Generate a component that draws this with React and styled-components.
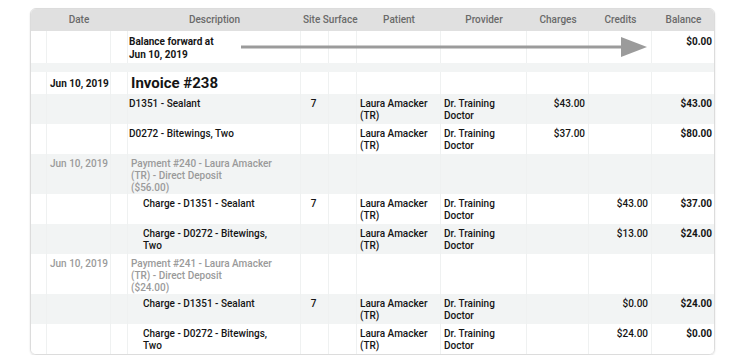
import React from "react";
import styled, { createGlobalStyle } from "styled-components";

const GlobalStyle = createGlobalStyle`
  body {
    margin: 0;
    background: #ffffff;
    font-family: Roboto, "Liberation Sans", Arial, sans-serif;
  }
`;

const Page = styled.div`
  padding: 8px 0 0 30px;
`;

const TableFrame = styled.div`
  position: relative;
  width: 685px;
  border: 1px solid #dcdcdc;
  border-radius: 6px;
  overflow: hidden;
  box-shadow: 0 1px 2px rgba(0, 0, 0, 0.12);
  box-sizing: border-box;
`;

const Ledger = styled.table`
  width: 100%;
  table-layout: fixed;
  border-collapse: separate;
  border-spacing: 0;
  font-size: 10px;
  line-height: 12px;
  font-weight: 500;
  color: #151515;
`;

const HeadCell = styled.th`
  background: #e0e0e0;
  color: #6a6a6a;
  font-weight: 500;
  font-size: 10px;
  height: 22px;
  padding: 0 2px;
  text-align: center;
  vertical-align: middle;
  white-space: nowrap;
  overflow: visible;
`;

const Row = styled.tr`
  background: ${(p) => (p.$shaded ? "#f2f4f4" : "#ffffff")};
`;

const Cell = styled.td`
  border-right: 1px solid #eff1f1;
  padding: ${(p) => (p.$pad ? p.$pad : "4px 3px 2px 3px")};
  vertical-align: top;
  text-align: ${(p) => (p.$right ? "right" : p.$center ? "center" : "left")};
  font-weight: ${(p) => (p.$bold ? 700 : 500)};
  color: ${(p) => (p.$muted ? "#9a9a9a" : "#151515")};
  white-space: ${(p) => (p.$nowrap ? "nowrap" : "normal")};
  &:last-child {
    border-right: none;
  }
`;

const Desc = styled.div`
  box-sizing: border-box;
  max-width: 150px;
  padding-left: ${(p) => (p.$indent ? "14px" : "0")};
`;

const BandRow = styled.tr`
  background: #f2f4f4;
  td {
    height: 9px;
    padding: 0;
  }
`;

const BalanceCell = styled(Cell)`
  line-height: 13px;
  padding: 4px 3px 2px 1px;
  height: 26px;
`;

const InvoiceTitle = styled.span`
  font-size: 15px;
  line-height: 18px;
  font-weight: 700;
  padding-left: 2px;
`;

const Arrow = styled.svg`
  position: absolute;
  left: 210px;
  top: 28px;
  pointer-events: none;
`;

const widths = [16, 64, 17, 173, 28, 28, 84, 86, 62, 63, 63];

const lines = [
  { desc: "D1351 - Sealant", site: "7", charge: "$43.00", balance: "$43.00" },
  { desc: "D0272 - Bitewings, Two", charge: "$37.00", balance: "$80.00" },
  { payment: "Payment #240 - Laura Amacker (TR) - Direct Deposit", amount: "($56.00)" },
  { desc: "Charge - D1351 - Sealant", indent: true, site: "7", credit: "$43.00", balance: "$37.00" },
  { desc: "Charge - D0272 - Bitewings, Two", indent: true, credit: "$13.00", balance: "$24.00" },
  { payment: "Payment #241 - Laura Amacker (TR) - Direct Deposit", amount: "($24.00)" },
  { desc: "Charge - D1351 - Sealant", indent: true, site: "7", credit: "$0.00", balance: "$24.00" },
  { desc: "Charge - D0272 - Bitewings, Two", indent: true, credit: "$24.00", balance: "$0.00" },
];

const Empty = ({ n }) => (
  <>
    {Array.from({ length: n }).map((_, i) => (
      <Cell key={i} />
    ))}
  </>
);

const LineRow = ({ item, shaded }) => {
  if (item.payment) {
    return (
      <Row $shaded={shaded}>
        <Cell $pad="4px 3px 0 3px" />
        <Cell $muted $nowrap $pad="4px 2px 0 3px">
          Jun 10, 2019
        </Cell>
        <Cell $pad="4px 3px 0 3px" />
        <Cell $muted $pad="4px 3px 0 3px">
          <Desc>{item.payment}</Desc>
          <Desc>{item.amount}</Desc>
        </Cell>
        <Empty n={7} />
      </Row>
    );
  }
  return (
    <Row $shaded={shaded}>
      <Empty n={3} />
      <Cell $pad="4px 3px 2px 1px">
        <Desc $indent={item.indent}>{item.desc}</Desc>
      </Cell>
      <Cell $center $pad="4px 4px 2px 2px">
        {item.site}
      </Cell>
      <Cell />
      <Cell>Laura Amacker (TR)</Cell>
      <Cell>Dr. Training Doctor</Cell>
      <Cell $right>{item.charge}</Cell>
      <Cell $right>{item.credit}</Cell>
      <Cell $right $bold>
        {item.balance}
      </Cell>
    </Row>
  );
};

const App = () => {
  return (
    <>
      <GlobalStyle />
      <Page>
        <TableFrame>
          <Ledger>
            <colgroup>
              {widths.map((w, i) => (
                <col key={i} style={{ width: w }} />
              ))}
            </colgroup>
            <thead>
              <tr>
                <HeadCell />
                <HeadCell>Date</HeadCell>
                <HeadCell />
                <HeadCell>Description</HeadCell>
                <HeadCell colSpan={2}>Site Surface</HeadCell>
                <HeadCell>Patient</HeadCell>
                <HeadCell>Provider</HeadCell>
                <HeadCell>Charges</HeadCell>
                <HeadCell>Credits</HeadCell>
                <HeadCell>Balance</HeadCell>
              </tr>
            </thead>
            <tbody>
              <Row>
                <Empty n={3} />
                <BalanceCell $bold>
                  Balance forward at
                  <br />
                  Jun 10, 2019
                </BalanceCell>
                <Empty n={6} />
                <BalanceCell $bold $right>
                  $0.00
                </BalanceCell>
              </Row>
              <BandRow>
                <td colSpan={11} />
              </BandRow>
              <Row>
                <Cell $pad="2px 3px 2px 3px" />
                <Cell $bold $nowrap $pad="6px 2px 2px 3px">
                  Jun 10, 2019
                </Cell>
                <Cell $pad="2px 3px 2px 3px" />
                <Cell $pad="2px 3px 2px 1px">
                  <InvoiceTitle>Invoice #238</InvoiceTitle>
                </Cell>
                {Array.from({ length: 7 }).map((_, i) => (
                  <Cell key={i} $pad="2px 3px 2px 3px" />
                ))}
              </Row>
              {lines.map((item, i) => (
                <LineRow key={i} item={item} shaded={i % 2 === 0} />
              ))}
            </tbody>
          </Ledger>
          <Arrow width="408" height="21" viewBox="0 0 408 21">
            <rect x="0" y="8.5" width="384" height="3" fill="#9b9b9b" />
            <polygon points="380,0 406,10 380,20" fill="#9b9b9b" />
          </Arrow>
        </TableFrame>
      </Page>
    </>
  );
};

export default App;
